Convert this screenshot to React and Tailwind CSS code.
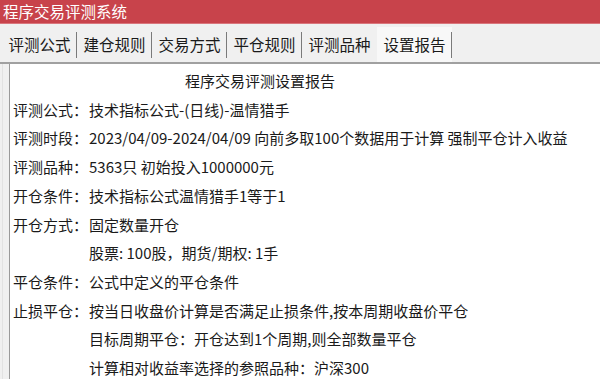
import React from 'react';

const tabs = ['评测公式', '建仓规则', '交易方式', '平仓规则', '评测品种', '设置报告'];

const rows = [
    { label: '评测公式：', value: '技术指标公式-(日线)-温情猎手' },
    { label: '评测时段：', value: '2023/04/09-2024/04/09 向前多取100个数据用于计算 强制平仓计入收益' },
    { label: '评测品种：', value: '5363只 初始投入1000000元' },
    { label: '开仓条件：', value: '技术指标公式温情猎手1等于1' },
    { label: '开仓方式：', value: '固定数量开仓' },
    { label: '', value: '股票: 100股，期货/期权: 1手' },
    { label: '平仓条件：', value: '公式中定义的平仓条件' },
    { label: '止损平仓：', value: '按当日收盘价计算是否满足止损条件,按本周期收盘价平仓' },
    { label: '', value: '目标周期平仓：开仓达到1个周期,则全部数量平仓' },
    { label: '', value: '计算相对收益率选择的参照品种：沪深300' },
];

const App = () => {
    return (
        <div className="w-[600px] h-[379px] overflow-hidden bg-[#f0f0f0] text-[#1a1a1a] font-['Noto_Sans_CJK_SC',sans-serif] flex flex-col">
            {/* Title bar */}
            <div className="h-[24px] shrink-0 bg-[#c8434b] text-white text-[15.5px] leading-[23px] pl-[3px] border-b border-[#d9767c]">
                程序交易评测系统
            </div>

            {/* Tabs */}
            <div className="h-[38px] shrink-0 flex items-end pl-[2px]">
                {tabs.map((t, i) => {
                    const active = i === tabs.length - 1;
                    return (
                        <div
                            key={t}
                            className={`w-[75px] h-[35px] flex items-center justify-center text-[15.5px] relative ${active ? 'bg-[#f8f8f8]' : ''}`}
                        >
                            <span className="mt-[1px]">{t}</span>
                            {i !== 4 && (
                                <span className="absolute right-0 top-[5px] h-[26px] w-px bg-[#7a7a7a]" />
                            )}
                        </div>
                    );
                })}
            </div>

            {/* Report panel */}
            <div className="flex-1 flex border-t-2 border-[#a0a0a0]">
                <div className="w-[10px] shrink-0 border-r border-[#9a9a9a] flex">
                    <div className="w-[3px] border-r border-[#e2e2e2]" />
                </div>
                <div className="flex-1 bg-white pt-[3px] pl-[3px] text-[15px] leading-[28.7px] whitespace-nowrap">
                    <div className="pl-[172px]">程序交易评测设置报告</div>
                    {rows.map((r, i) => (
                        <div key={i} className="flex">
                            <span className="w-[76px] shrink-0">{r.label}</span>
                            <span>{r.value}</span>
                        </div>
                    ))}
                </div>
            </div>
        </div>
    );
};

export default App;
